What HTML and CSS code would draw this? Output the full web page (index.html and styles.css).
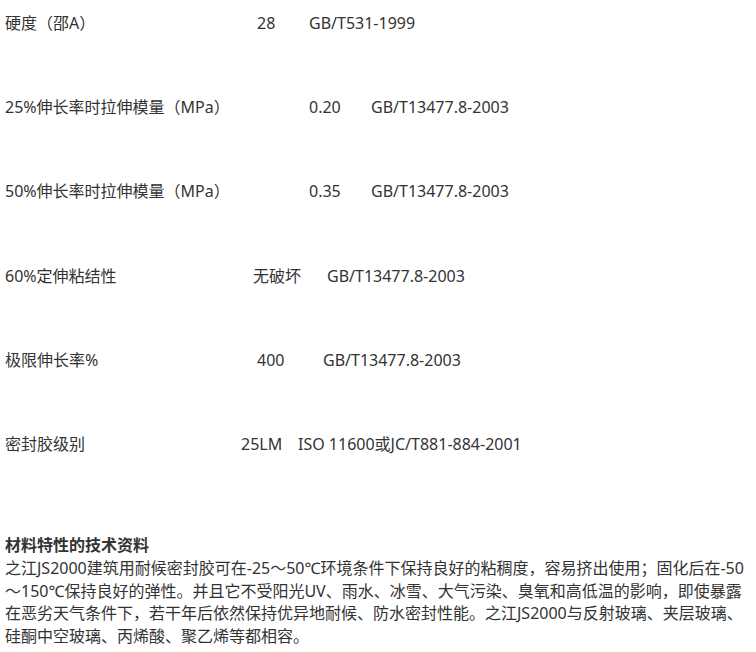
FILE: index.html
```html
<!DOCTYPE html>
<html lang="zh-CN">
<head>
    <meta charset="UTF-8">
    <meta name="viewport" content="width=device-width, initial-scale=1.0">
    <title>之江JS2000建筑用耐候密封胶</title>
    <link rel="stylesheet" href="styles.css">
</head>
<body>
    <div class="content">
        <div class="specs">
            <div class="row r1"><span class="label">硬度（邵A）</span><span class="value">28</span><span>GB/T531-1999</span></div>
            <div class="row r2"><span class="label">25%伸长率时拉伸模量（MPa）</span><span class="value">0.20</span><span>GB/T13477.8-2003</span></div>
            <div class="row r2"><span class="label">50%伸长率时拉伸模量（MPa）</span><span class="value">0.35</span><span>GB/T13477.8-2003</span></div>
            <div class="row r4"><span class="label">60%定伸粘结性</span><span class="value">无破坏</span><span>GB/T13477.8-2003</span></div>
            <div class="row r5"><span class="label">极限伸长率%</span><span class="value">400</span><span>GB/T13477.8-2003</span></div>
            <div class="row r6"><span class="label">密封胶级别</span><span class="value">25LM</span><span>ISO 11600或JC/T881-884-2001</span></div>
        </div>

        <h3>材料特性的技术资料</h3>
        <p>之江JS2000建筑用耐候密封胶可在-25～50℃环境条件下保持良好的粘稠度，容易挤出使用；固化后在-50～150℃保持良好的弹性。并且它不受阳光UV、雨水、冰雪、大气污染、臭氧和高低温的影响，即使暴露在恶劣天气条件下，若干年后依然保持优异地耐候、防水密封性能。之江JS2000与反射玻璃、夹层玻璃、硅酮中空玻璃、丙烯酸、聚乙烯等都相容。</p>
    </div>
</body>
</html>
```

FILE: styles.css
```css
body {
    margin: 0;
    padding: 0;
    background-color: #fff;
    color: #333;
    font-family: "Noto Sans", "Noto Sans CJK SC", sans-serif;
    font-size: 16px;
}

.content {
    padding: 12px 5px 0 5px;
    width: 742px;
}

.specs {
    margin-bottom: 79px;
}

.row {
    display: flex;
    line-height: 22px;
    height: 22px;
    margin-bottom: 62.2px;
    white-space: nowrap;
}

.row:last-child {
    margin-bottom: 0;
}

.label,
.value {
    flex-shrink: 0;
}

.r1 .label { width: 252px; }
.r1 .value { width: 52px; }

.r2 .label { width: 304px; }
.r2 .value { width: 62px; }

.r4 .label { width: 248px; }
.r4 .value { width: 74px; }

.r5 .label { width: 252px; }
.r5 .value { width: 66px; }

.r6 .label { width: 236px; }
.r6 .value { width: 57px; }

h3 {
    margin: 0;
    font-size: 16px;
    font-weight: bold;
    line-height: 23px;
}

p {
    margin: 0;
    line-height: 22.6px;
}
```
